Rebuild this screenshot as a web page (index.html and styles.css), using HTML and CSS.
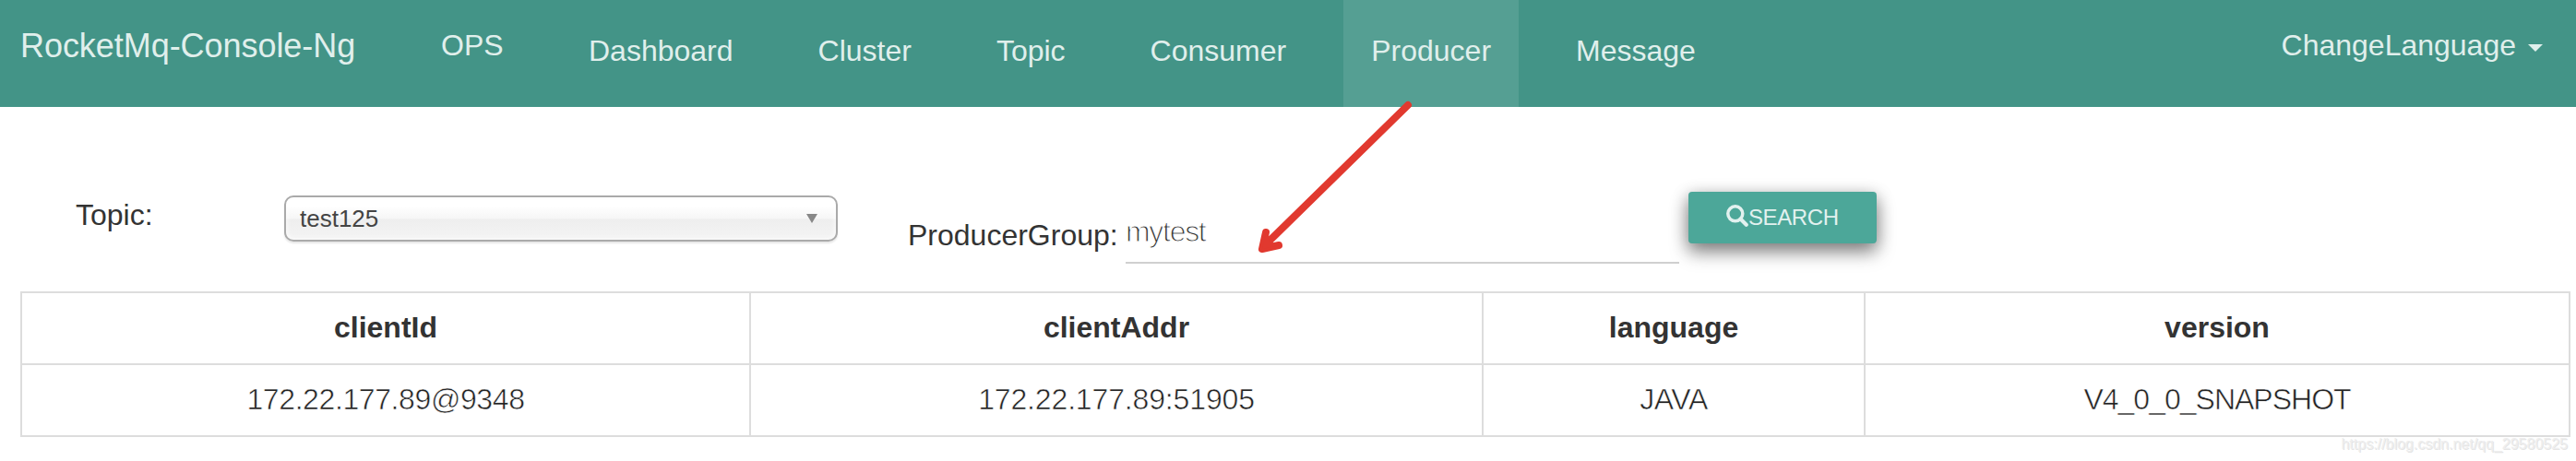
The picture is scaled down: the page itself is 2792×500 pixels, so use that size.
FILE: index.html
```html
<!DOCTYPE html>
<html lang="en">
<head>
<meta charset="utf-8">
<title>RocketMq-Console-Ng</title>
<link rel="stylesheet" href="styles.css">
</head>
<body>
<nav class="navbar">
  <a class="brand">RocketMq-Console-Ng</a>
  <a class="ops">OPS</a>
  <ul class="menu">
    <li>Dashboard</li>
    <li>Cluster</li>
    <li>Topic</li>
    <li>Consumer</li>
    <li class="active">Producer</li>
    <li>Message</li>
  </ul>
  <a class="language">ChangeLanguage<span class="caret"></span></a>
</nav>
<main>
  <form class="filters">
    <label class="topic-label">Topic:</label>
    <div class="select"><span>test125</span><span class="select-arrow"></span></div>
    <label class="group-label">ProducerGroup:</label>
    <div class="group-input">mytest</div>
    <button class="search" type="button">
      <svg class="search-icon" viewBox="0 0 24 24"><circle cx="9.8" cy="9.8" r="8" fill="none" stroke="currentColor" stroke-width="3.5"/><path d="M15.5 15.5 L21.7 21.7" stroke="currentColor" stroke-width="4.2" stroke-linecap="round"/></svg><span>SEARCH</span>
    </button>
  </form>
  <table class="clients">
    <colgroup><col class="c1"><col class="c2"><col class="c3"><col class="c4"></colgroup>
    <tr><th>clientId</th><th>clientAddr</th><th>language</th><th>version</th></tr>
    <tr><td>172.22.177.89@9348</td><td class="addr">172.22.177.89:51905</td><td>JAVA</td><td class="version">V4_0_0_SNAPSHOT</td></tr>
  </table>
</main>
<div class="watermark">https://blog.csdn.net/qq_29580525</div>
<svg class="arrow" viewBox="0 0 180 180"><path d="M167 14 L13 165 M13 152 L9 170 L27 166" /><path class="arrow-tip" d="M13 152 L9 170 L27 166 L17 162 Z"/></svg>
</body>
</html>
```
FILE: styles.css
```css
* { box-sizing: border-box; }
body {
  margin: 0;
  width: 2792px;
  height: 500px;
  overflow: hidden;
  position: relative;
  background: #fff;
  color: #333;
  font: 32px "Liberation Sans", Arial, sans-serif;
}
.navbar {
  display: flex;
  height: 116px;
  padding: 0 36px 0 22px;
  background: #439487;
  color: #e0efec;
}
.brand { width: 456px; font-size: 36px; line-height: 99px; letter-spacing: -.05px; }
.ops { width: 130px; line-height: 98px; }
.menu {
  display: flex;
  gap: 32px;
  margin: 0;
  padding: 0;
  list-style: none;
  line-height: 110px;
}
.menu li { padding: 0 30px; }
.menu .active { background: #559f93; }
.language {
  display: flex;
  margin-left: auto;
  line-height: 98px;
}
.caret {
  width: 16px;
  height: 8px;
  margin: 48px 0 0 13px;
  background: currentColor;
  clip-path: polygon(0 0, 100% 0, 50% 100%);
}
.filters {
  display: flex;
  align-items: flex-start;
  height: 200px;
  padding-left: 82px;
}
.topic-label { width: 226px; margin-top: 97px; line-height: 40px; }
.select {
  display: flex;
  align-items: center;
  justify-content: space-between;
  width: 600px;
  height: 50px;
  margin-top: 96px;
  padding: 0 20px 0 15px;
  border: 2px solid #aaa;
  border-radius: 10px;
  background: linear-gradient(#fff 20%, #f6f6f6 50%, #eee 52%, #f4f4f4 100%);
  box-shadow: inset 0 0 6px #fff, 0 2px 2px rgba(0, 0, 0, .1);
  color: #444;
  font-size: 26px;
}
.select-arrow {
  width: 12px;
  height: 10px;
  background: #888;
  clip-path: polygon(0 0, 100% 0, 50% 100%);
}
.group-label { width: 236px; margin: 119px 0 0 76px; line-height: 40px; white-space: nowrap; }
.group-input {
  width: 600px;
  height: 54px;
  margin-top: 116px;
  border-bottom: 2px solid #d0d0d0;
  color: #333;
  font-size: 32px;
  line-height: 39px;
  letter-spacing: -1.3px;
  -webkit-text-stroke: 1.1px #fff;
}
.search {
  display: flex;
  align-items: center;
  width: 204px;
  height: 56px;
  margin: 92px 0 0 10px;
  padding: 0 0 0 41px;
  border: 0;
  border-radius: 4px;
  background: #4ca799;
  box-shadow: 0 10px 20px rgba(0, 0, 0, .36), 0 4px 18px rgba(0, 0, 0, .28);
  color: #e2f1ef;
  font: 24px "Liberation Sans", Arial, sans-serif;
  letter-spacing: -.4px;
}
.search-icon { width: 24px; height: 24px; margin-top: -4px; }
.clients {
  width: 2764px;
  margin-left: 22px;
  border-collapse: collapse;
  table-layout: fixed;
}
.c1 { width: 790px; }
.c2 { width: 794px; }
.c3 { width: 414px; }
.clients th, .clients td {
  height: 78px;
  padding: 0 0 2px;
  border: 2px solid #ddd;
  text-align: center;
}
.clients td {
  color: #222;
  letter-spacing: -.4px;
  -webkit-text-stroke: .6px #fff;
}
.clients .addr { letter-spacing: -.15px; }
.clients .version { letter-spacing: -1px; }
.watermark {
  position: absolute;
  right: 9px;
  top: 472px;
  color: #eee;
  font-size: 16px;
  line-height: 20px;
  text-shadow: 1px 1px 0 #e4e4e4;
}
.arrow {
  position: absolute;
  left: 1359px;
  top: 100px;
  width: 180px;
  height: 180px;
  fill: none;
  stroke: #e1392f;
  stroke-width: 8px;
  stroke-linecap: round;
  stroke-linejoin: round;
}
.arrow-tip { fill: #e1392f; stroke: none; }
```
